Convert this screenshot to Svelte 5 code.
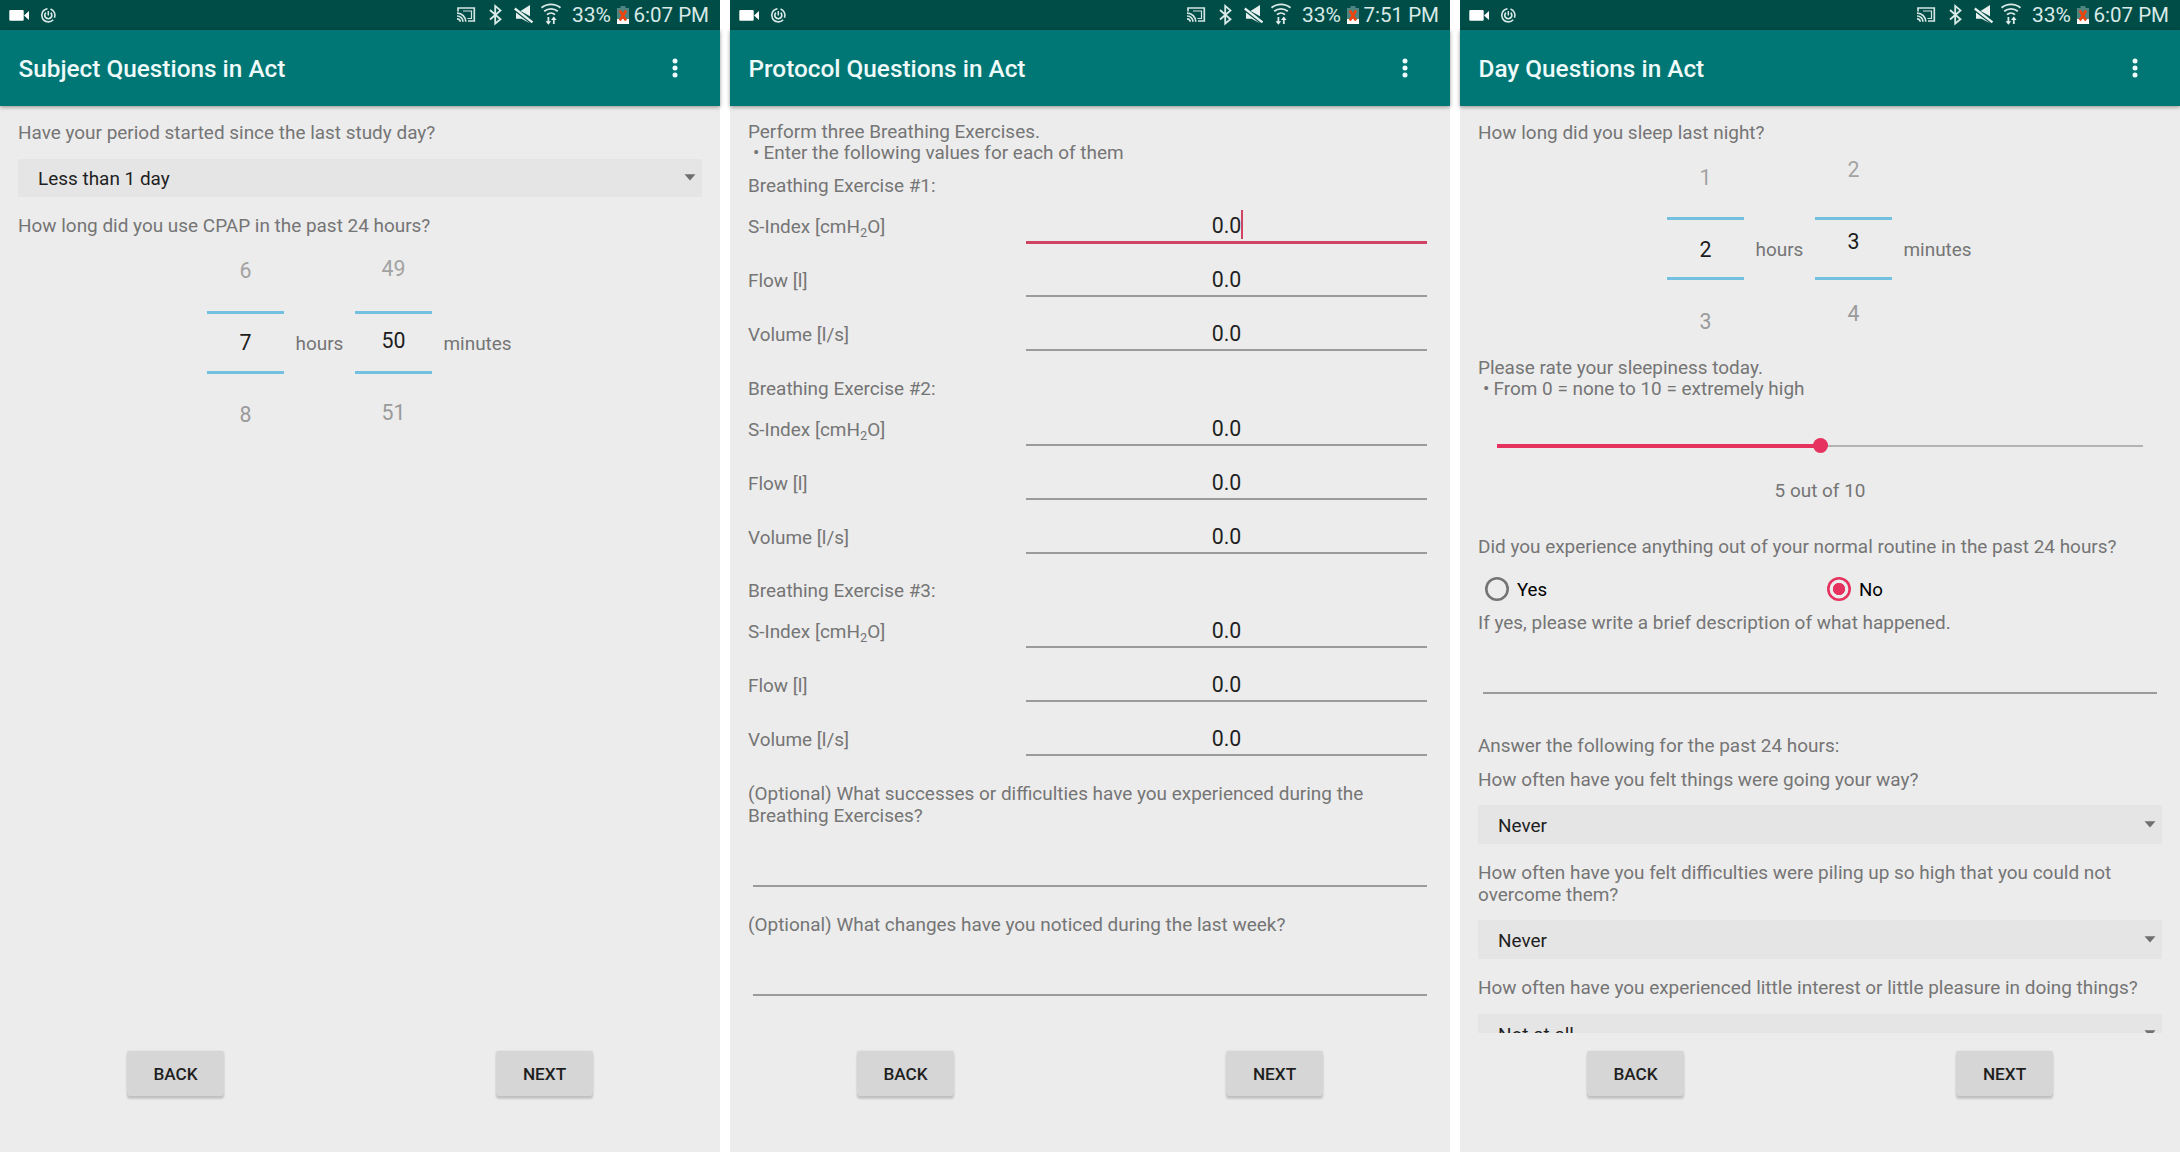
<script>
  const exercises = [1, 2, 3];
  const fields = ['S-Index', 'Flow [l]', 'Volume [l/s]'];
  const subjectTime = [
    { values: [6, 7, 8], shift: 1, unit: 'hours' },
    { values: [49, 50, 51], shift: -1, unit: 'minutes' }
  ];
  const sleepTime = [
    { values: [1, 2, 3], shift: 0.5, unit: 'hours' },
    { values: [2, 3, 4], shift: -7.5, unit: 'minutes' }
  ];
  const rating = 5;
</script>

{#snippet header(title, time)}
  <div class="status">
    <svg class="notif" viewBox="0 0 60 30">
      <rect x="9.3" y="10" width="14.4" height="10.8" rx="1" fill="#fff" />
      <path d="M24 15.4 29 11v9z" fill="#fff" />
      <g fill="none" stroke="#d9eae8">
        <path d="M50.500 9A6.600 6.600 0 0 1 54.500 17.700M53.200 19.700A6.600 6.600 0 1 1 47.500 8.700" stroke-width="1.600" />
        <path d="M50.700 12.700a3.500 3.500 0 1 1-4.800 0" stroke-width="1.700" />
        <path d="M48.300 11v4.500" stroke-width="1.500" />
      </g>
    </svg>
    <svg class="icons" viewBox="450 0 116 30">
      <g fill="none" stroke="#d3e5e3" stroke-width="1.700">
        <path d="M458 11.500V8h16.300v13H468" />
        <path d="M457 13.200a8.600 8.600 0 0 1 8.800 8.600M457 16a5.900 5.900 0 0 1 6 5.800M457 18.800a3 3 0 0 1 3.200 3" />
        <path d="M463 11h8.500v7.500h-4" stroke-width="1.200" />
      </g>
      <path d="M490 10l10.500 9.200-5.300 4.300V6l5.300 4.400L490 19.500" fill="none" stroke="#d9eae8" stroke-width="1.800" />
      <path d="M530 5v11.200L520.500 11zM516 12.500l14 10.800-8.500-4.500H516z" fill="#e6f1f0" />
      <path d="M514.800 8.500 532.500 22.300" stroke="#e6f1f0" stroke-width="2.300" />
      <g fill="none" stroke="#d9eae8" stroke-width="1.800">
        <path d="M541.500 7.800a15 15 0 0 1 19 0M544.200 11.300a10.500 10.500 0 0 1 13.600 0M547 14.600a6 6 0 0 1 8 0" />
        <path d="M548.400 17v6M553.800 24v-6" />
      </g>
      <path d="M545.600 21.200h5.600l-2.800 3.600zM551 20h5.600l-2.800-3.600z" fill="#e6f1f0" />
    </svg>
    <span class="percent">33%</span>
    <svg class="battery" viewBox="0 0 12 20">
      <path d="M3.500 1h5v2H12v16H0V3h3.500z" fill="#4f8580" />
      <path d="M0 14h12v5H0z" fill="#fff" />
      <path d="M2.800 5.500l6.200 10M9 5.500l-6.200 10" stroke="#f0440e" stroke-width="2.600" />
    </svg>
    <span class="clock">{time}</span>
  </div>
  <header>
    <h1>{title}</h1>
    <svg class="more" viewBox="0 0 8 22">
      <circle cx="4" cy="4" r="2.500" />
      <circle cx="4" cy="11" r="2.500" />
      <circle cx="4" cy="18" r="2.500" />
    </svg>
  </header>
{/snippet}

{#snippet select(value)}
  <div class="select">
    <span>{value}</span>
    <svg viewBox="0 0 12 7"><path d="M0.500 0.300h11L6 6.500z" /></svg>
  </div>
{/snippet}

{#snippet duration(columns)}
  <div class="duration">
    {#each columns as column}
      <div class="picker">
        <div class="wheel" style="transform: translateY({column.shift}px)">
          {#each column.values as value, i}
            <span class:chosen={i === 1} class:before={i === 0}>{value}</span>
          {/each}
        </div>
        <div class="frame"></div>
      </div>
      <span class="unit">{column.unit}</span>
    {/each}
  </div>
{/snippet}

{#snippet actions()}
  <footer>
    <button>BACK</button>
    <button>NEXT</button>
  </footer>
{/snippet}

<main>
  <section>
    {@render header('Subject Questions in Act', '6:07 PM')}
    <div class="body">
      <p>Have your period started since the last study day?</p>
      {@render select('Less than 1 day')}
      <p>How long did you use CPAP in the past 24 hours?</p>
      {@render duration(subjectTime)}
    </div>
    {@render actions()}
  </section>

  <section>
    {@render header('Protocol Questions in Act', '7:51 PM')}
    <div class="body protocol">
      <p>Perform three Breathing Exercises.<br /><span class="bullet">•</span>Enter the following values for each of them</p>
      {#each exercises as exercise}
        <div class="exercise">
          <p>Breathing Exercise #{exercise}:</p>
          {#each fields as field, i}
            <div class="field" class:focused={exercise === 1 && i === 0}>
              <span class="label">{field}{#if i === 0}{' '}[cmH<sub>2</sub>O]{/if}</span>
              <div class="input"><span>0.0</span></div>
            </div>
          {/each}
        </div>
      {/each}
      <p class="optional">(Optional) What successes or difficulties have you experienced during the Breathing Exercises?</p>
      <div class="line"></div>
      <p class="last">(Optional) What changes have you noticed during the last week?</p>
      <div class="line"></div>
    </div>
    {@render actions()}
  </section>

  <section>
    {@render header('Day Questions in Act', '6:07 PM')}
    <div class="body day">
      <p>How long did you sleep last night?</p>
      {@render duration(sleepTime)}
      <p>Please rate your sleepiness today.<br /><span class="bullet">•</span>From 0 = none to 10 = extremely high</p>
      <div class="slider">
        <div class="filled" style="width: {rating * 10}%"></div>
        <div class="thumb"></div>
        <div class="rest"></div>
      </div>
      <p class="result">{rating} out of 10</p>
      <p>Did you experience anything out of your normal routine in the past 24 hours?</p>
      <div class="radios">
        <div class="radio"><i></i><span>Yes</span></div>
        <div class="radio on"><i></i><span>No</span></div>
      </div>
      <p>If yes, please write a brief description of what happened.</p>
      <div class="line"></div>
      <p class="group">Answer the following for the past 24 hours:</p>
      <p class="next">How often have you felt things were going your way?</p>
      {@render select('Never')}
      <p>How often have you felt difficulties were piling up so high that you could not overcome them?</p>
      {@render select('Never')}
      <p>How often have you experienced little interest or little pleasure in doing things?</p>
      {@render select('Not at all')}
    </div>
    {@render actions()}
  </section>
</main>

<style>
  :global(body) {
    margin: 0;
    background: #fff;
  }

  main {
    display: flex;
    gap: 10px;
    width: 2180px;
    height: 1152px;
    overflow: hidden;
    font-family: Roboto, 'Liberation Sans', sans-serif;
    font-size: 18.95px;
    line-height: 21.67px;
    color: #757575;
  }

  section {
    display: flex;
    flex-direction: column;
    width: 720px;
    height: 1152px;
    background: #ececec;
  }

  svg {
    display: block;
    flex: none;
  }

  .status {
    display: flex;
    align-items: center;
    flex: none;
    height: 30px;
    background: #004d47;
    color: #d9eae8;
    font-size: 20.5px;
    line-height: 34px;
    white-space: nowrap;
  }

  .notif {
    width: 60px;
    height: 30px;
    margin-right: 390px;
  }

  .icons {
    width: 116px;
    height: 30px;
    margin-right: 6px;
  }

  .percent {
    width: 44.5px;
    font-size: 21px;
  }

  .battery {
    width: 12px;
    height: 20px;
  }

  .clock {
    flex: 1;
    padding-right: 11px;
    text-align: right;
  }

  header {
    display: flex;
    align-items: center;
    justify-content: space-between;
    flex: none;
    height: 76px;
    padding: 0 41.500px 0 18.5px;
    background: #007775;
    box-shadow: 0 1px 4px rgba(0, 0, 0, 0.4);
    box-sizing: border-box;
    z-index: 1;
  }

  h1 {
    margin: 2px 0 0;
    color: #effafa;
    font-size: 24.35px;
    font-weight: 500;
    line-height: 28px;
  }

  .more {
    width: 8px;
    height: 22px;
    fill: #effafa;
  }

  .body {
    height: 927px;
    padding: 15.7px 18px 0;
    overflow: hidden;
    box-sizing: border-box;
  }

  p {
    margin: 0;
  }

  .bullet {
    display: inline-block;
    width: 10.5px;
    padding-left: 5px;
  }

  .select {
    display: flex;
    align-items: center;
    justify-content: space-between;
    height: 38.5px;
    margin: 15.200px 0 18px;
    padding: 0 6px 0 20px;
    background: #e5e5e5;
    color: #1f1f1f;
    box-sizing: border-box;
  }

  .select span {
    margin-top: 3px;
  }

  .select svg {
    width: 12px;
    height: 7px;
    fill: #6f6f6f;
  }

  .duration {
    display: grid;
    grid-template-columns: 77px 71px 77px 80px;
    align-items: center;
    height: 216px;
    margin: -2.700px 0 0 189px;
  }

  .picker {
    position: relative;
    height: 216px;
  }

  .wheel {
    display: grid;
    grid-template-rows: repeat(3, 72px);
    color: #9a9a9a;
    font-size: 21.33px;
    line-height: 72px;
    text-align: center;
  }

  .wheel .before {
    color: #a3a3a3;
  }

  .wheel .chosen {
    color: #1c1c1c;
  }

  .frame {
    position: absolute;
    inset: 76.5px 0;
    border: solid #74c0e1;
    border-width: 3px 0;
  }

  .unit {
    padding-left: 11.500px;
    margin-top: 3px;
  }

  .protocol {
    padding-top: 14.700px;
  }

  .exercise {
    height: 191.100px;
    padding-top: 11.400px;
  }

  .field {
    display: flex;
    align-items: center;
    height: 54px;
    padding-right: 5px;
  }

  .exercise p + .field {
    margin-top: 2.800px;
  }

  .label {
    width: 278px;
  }

  sub {
    font-size: 12.800px;
    line-height: 0;
    vertical-align: -4px;
  }

  .input {
    flex: 1;
    height: 29px;
    margin-top: 2px;
    border-bottom: 2px solid #9b9b9b;
    color: #1f1f1f;
    font-size: 21.330px;
    line-height: 27px;
    text-align: center;
  }

  .input span {
    display: inline-block;
  }

  .focused .input {
    border-bottom: 3px solid #cf4462;
  }

  .focused .input span {
    height: 29px;
    margin: -2px -2px 0 0;
    padding-top: 2px;
    border-right: 2px solid #cf4462;
    box-sizing: border-box;
  }

  .optional {
    margin-top: 11.500px;
  }

  .line {
    height: 58.400px;
    margin: 0 5px 0 4.500px;
    border-bottom: 2px solid #9b9b9b;
  }

  .last {
    margin-top: 27px;
  }

  .slider {
    display: flex;
    align-items: center;
    height: 16px;
    margin: 37.500px 19px 0;
  }

  .filled {
    flex: none;
    height: 4px;
    background: #e6325e;
  }

  .thumb {
    flex: none;
    width: 15px;
    height: 15px;
    margin: 0 -7.500px;
    border-radius: 50%;
    background: #e6325e;
    z-index: 1;
  }

  .rest {
    flex: 1;
    height: 2px;
    background: #b3b3b3;
  }

  .result {
    margin: 26.500px 0 34px;
    text-align: center;
  }

  .radios {
    display: grid;
    grid-template-columns: 342px 342px;
    height: 24px;
    margin: 19px 0 11.300px;
    padding-left: 7px;
    color: #000;
  }

  .radio {
    display: flex;
    align-items: center;
    gap: 8px;
  }

  .radio span {
    margin-top: 4px;
    font-size: 18.670px;
  }

  .radio i {
    width: 24px;
    height: 24px;
    border-radius: 50%;
    box-shadow: inset 0 0 0 2.600px #757575;
  }

  .radio.on i {
    background: radial-gradient(circle, #e6325e 5.800px, transparent 6.500px);
    box-shadow: inset 0 0 0 2.600px #e6325e;
  }

  .group {
    margin-top: 41.500px;
  }

  .next {
    margin-top: 11.700px;
  }

  footer {
    display: flex;
    justify-content: space-between;
    flex: none;
    padding: 18px 127px 0;
  }

  button {
    width: 97px;
    height: 45px;
    padding: 0;
    border: 0;
    border-radius: 3px;
    background: #d5d6d5;
    box-shadow: 0 3px 2px rgba(0, 0, 0, 0.16), 0 0 2px rgba(0, 0, 0, 0.12);
    color: #1f1f1f;
    font: 500 17.200px Roboto, sans-serif;
  }
</style>
